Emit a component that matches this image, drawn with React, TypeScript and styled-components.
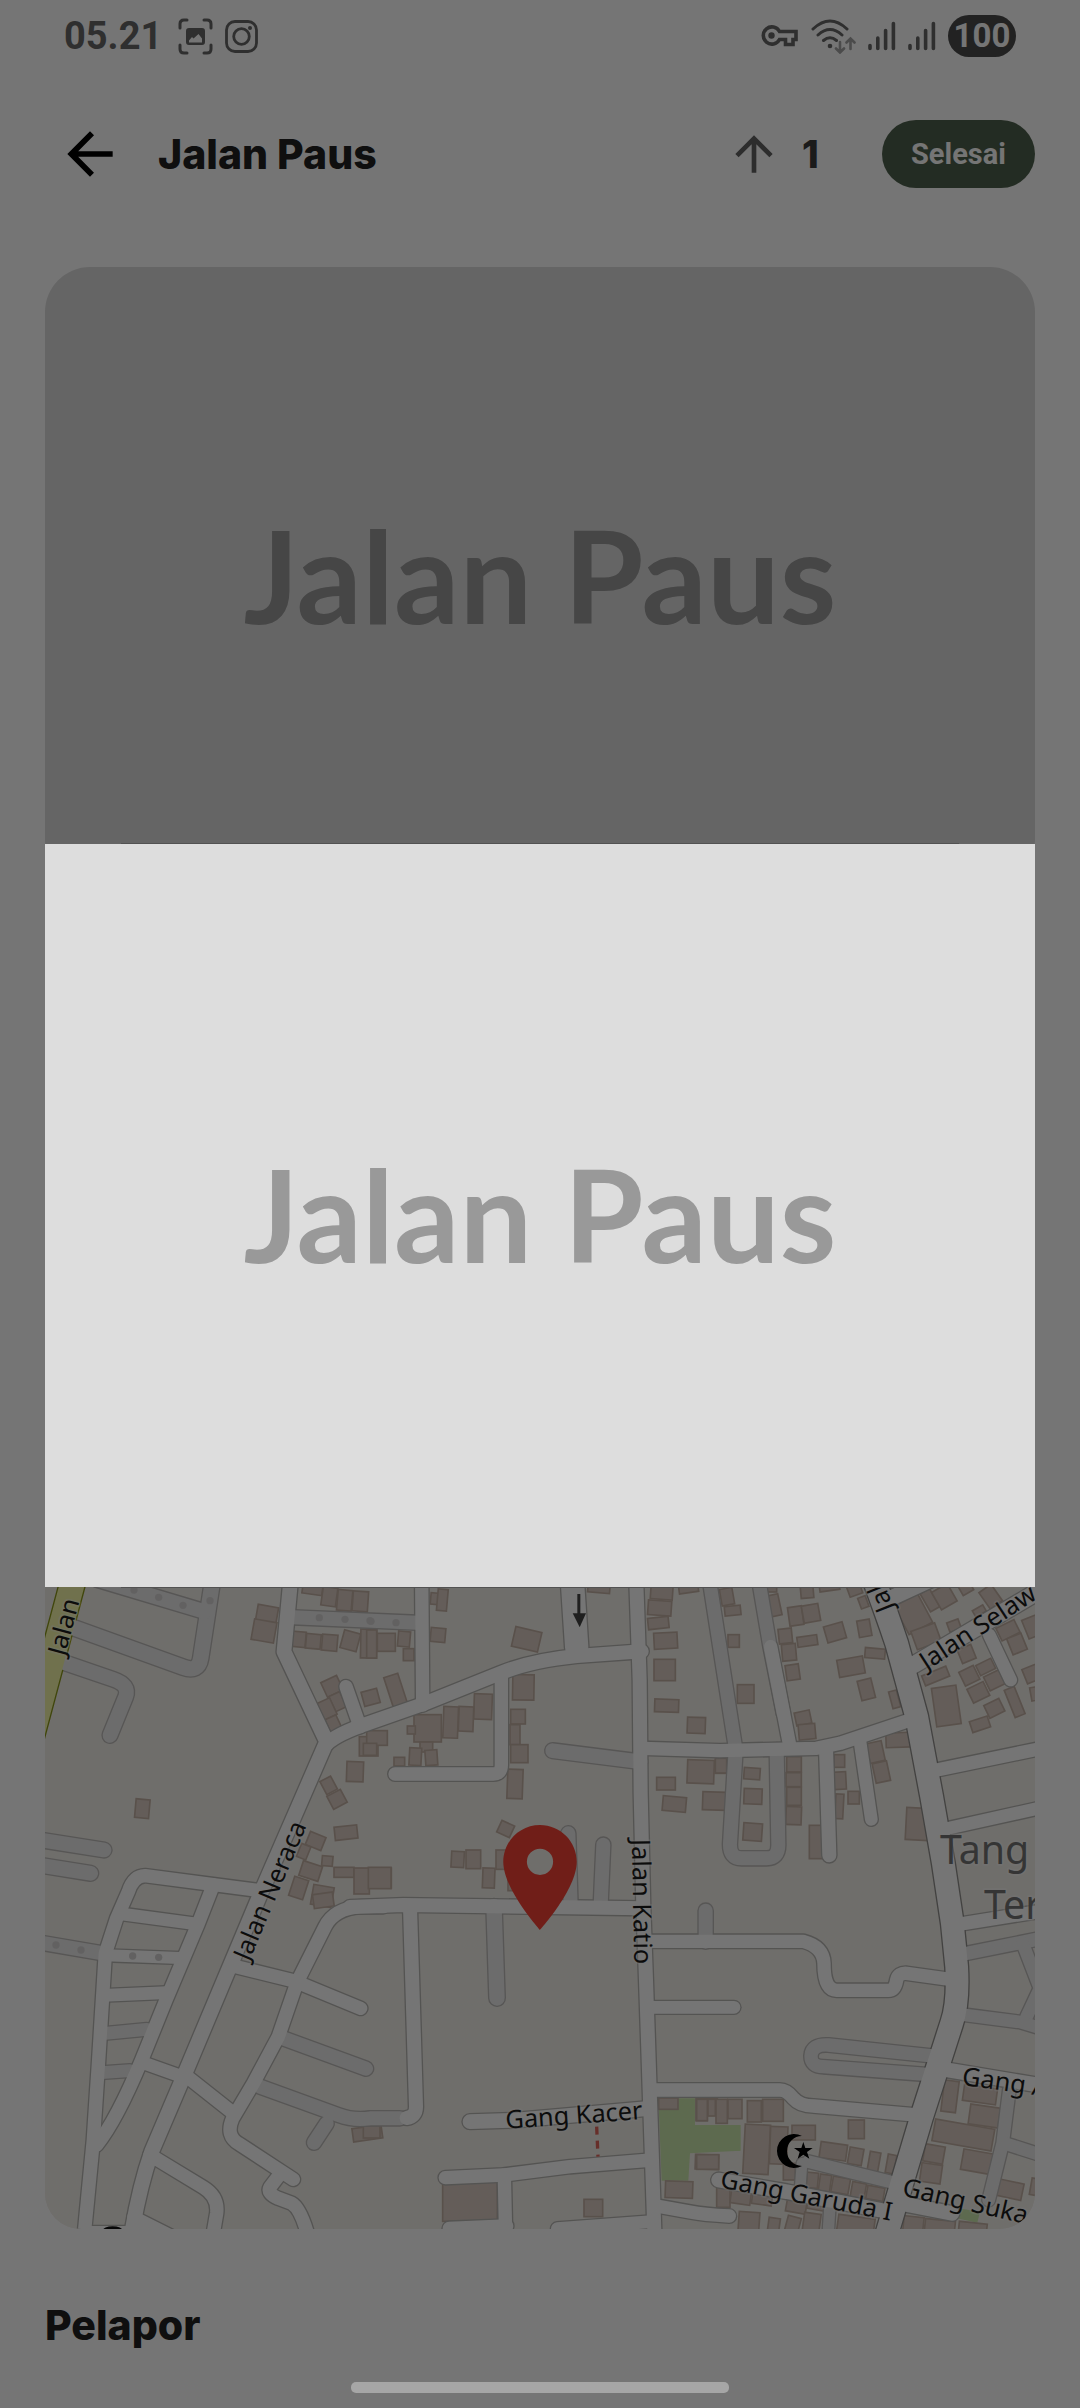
import React from 'react';
import styled, { createGlobalStyle } from 'styled-components';

const GlobalStyle = createGlobalStyle`
  *, *::before, *::after { box-sizing: border-box; }
  html, body { margin: 0; background: #ffffff; }
  body { font-family: Inter, "Open Sans", sans-serif; color: #222222; }
`;

/* ---------- page ---------- */

const Page = styled.div`
  min-height: 100vh;
  display: flex;
  flex-direction: column;
  background: #ffffff;
`;

const StatusBar = styled.div`
  height: 72px;
  padding: 0 64px;
  display: flex;
  align-items: center;
  justify-content: space-between;
  color: #666666;
  font-family: Roboto, sans-serif;
  font-weight: 700;
`;

const StatusGroup = styled.div<{ $gap: number }>`
  display: flex;
  align-items: center;
  gap: ${(p) => p.$gap}px;
`;

const Clock = styled.span`
  font-size: 38px;
  line-height: 48px;
  margin-right: 4px;
`;

const Battery = styled.span`
  width: 68px;
  height: 42px;
  border-radius: 21px;
  display: flex;
  align-items: center;
  justify-content: center;
  background: #4a4a4a;
  color: #ffffff;
  font-size: 33px;
  line-height: 42px;
`;

const Header = styled.header`
  height: 164px;
  padding: 0 45px 0 56px;
  display: flex;
  align-items: center;
`;

const IconButton = styled.button`
  border: 0;
  padding: 0;
  background: none;
  display: flex;
  color: inherit;
`;

const BackButton = styled(IconButton)`
  color: #000000;
  margin-right: 34px;
`;

const Title = styled.h1`
  flex: 1;
  margin: 0;
  font-size: 41px;
  line-height: 56px;
  font-weight: 800;
`;

const VoteButton = styled(IconButton)`
  color: #626262;
  margin-right: 20px;
`;

const VoteCount = styled.span`
  width: 80px;
  font-size: 38px;
  line-height: 56px;
  font-weight: 800;
  color: #3c3c3c;
`;

const DoneButton = styled.button`
  border: 0;
  height: 68px;
  width: 153px;
  padding: 0;
  border-radius: 34px;
  background: #4e604c;
  color: #ffffff;
  font-family: Roboto, sans-serif;
  font-size: 29px;
  line-height: 40px;
  font-weight: 700;
`;

const Main = styled.main`
  display: flex;
  flex-direction: column;
  padding: 31px 45px 56px;
`;

const Picture = styled.div<{ $ratio: string }>`
  width: 100%;
  aspect-ratio: ${(p) => p.$ratio};
  padding-bottom: 5px;
  display: flex;
  align-items: center;
  justify-content: center;
  background: #dddddd;
  color: #999999;
  font-family: Lato, sans-serif;
  font-size: 129px;
  line-height: 156px;
  font-weight: 700;
  white-space: nowrap;
`;

const Cover = styled(Picture)`
  border-radius: 45px;
`;

const MapCard = styled.div`
  margin-top: 640px;
  height: 703px;
  border-radius: 36px;
  overflow: hidden;
  background: #f2efe9;
`;

const SectionTitle = styled.h2`
  margin: 68px 0 0;
  font-size: 41px;
  line-height: 56px;
  font-weight: 800;
`;

/* ---------- picture viewer ---------- */

const Overlay = styled.div`
  position: fixed;
  inset: 0;
  padding: 68px 45px 45px;
  display: flex;
  align-items: center;
  justify-content: center;
  background: rgba(0, 0, 0, 0.54);
`;

const Viewer = styled.div`
  position: relative;
  width: 100%;

  &::before {
    content: "";
    position: absolute;
    z-index: -1;
    inset: -1px 76px;
    background: #525252;
  }
`;

const HomeHandle = styled.div`
  position: fixed;
  bottom: 15px;
  left: 50%;
  margin-left: -189px;
  width: 378px;
  height: 11px;
  border-radius: 5px;
  background: #a6a6a6;
`;

/* ---------- map ---------- */

type Tile = 'A' | 'B' | 'C' | 'D' | 'E' | 'F';
type Kind = 'road' | 'service' | 'main' | 'secondary';

const ORIGIN: Record<Tile, [number, number]> = {
  A: [30, 1580], B: [370, 1580], C: [700, 1580],
  D: [30, 1900], E: [370, 1900], F: [700, 1900],
};

const place = (t: Tile) => `translate(${ORIGIN[t][0]} ${ORIGIN[t][1]}) scale(0.33333)`;

const ROAD_STYLE: Record<Kind, { fill: string; edge: string }> = {
  service: { fill: '#ebebeb', edge: '#bdbbb9' },
  road: { fill: '#ffffff', edge: '#b8b7b4' },
  main: { fill: '#ffffff', edge: '#92918e' },
  secondary: { fill: '#f3f6a8', edge: '#8d9a1c' },
};

const ROADS: [Tile, Kind, number, string][] = [
  ['A', 'service', 50, 'M100 132 L460 262 Q505 278 512 235 L548 0'],
  ['A', 'service', 48, 'M200 -2 L525 95'],
  ['A', 'service', 48, 'M80 240 L250 298 Q300 315 287 350 L240 466'],
  ['A', 'service', 46, 'M790 112 L1160 128'],
  ['A', 'service', 48, 'M20 778 L222 810'],
  ['A', 'service', 48, 'M20 854 L182 880'],
  ['D', 'service', 46, 'M20 126 L230 162'],
  ['D', 'service', 42, 'M225 400 L350 388'],
  ['D', 'service', 42, 'M215 518 L300 512'],
  ['D', 'service', 46, 'M760 415 L1008 506'],
  ['D', 'service', 46, 'M890 670 L852 728'],
  ['D', 'service', 46, 'M690 560 L925 645 Q970 662 1020 655 L1110 655'],
  ['B', 'service', 48, 'M548 512 L810 545'],
  ['B', 'service', 46, 'M595 760 L602 975'],
  ['B', 'service', 46, 'M700 794 L692 975'],
  ['C', 'service', 44, 'M28 0 L106 500'],
  ['C', 'service', 44, 'M176 0 L210 200 L250 400'],
  ['C', 'service', 46, 'M107 510 L90 790 Q88 835 125 835 H200 Q235 835 235 795 L230 510'],
  ['E', 'service', 46, 'M1007 32 V125'],
  ['E', 'service', 50, 'M372 20 L381 294'],
  ['F', 'service', 44, 'M780 164 L1020 116'],
  ['F', 'service', 42, 'M968 130 L1020 265 L980 350'],
  ['F', 'service', 42, 'M790 344 L960 366 L1020 384'],
  ['F', 'service', 44, 'M710 469 L385 435 Q335 432 333 468 Q333 500 370 500 L690 524'],
  ['F', 'service', 42, 'M928 570 L908 730 L866 900'],
  ['F', 'service', 42, 'M920 732 L1020 764'],
  ['F', 'service', 42, 'M325 785 L590 850'],
  ['F', 'service', 38, 'M390 915 L384 1010'],
  ['F', 'service', 36, 'M306 790 L300 870'],
  ['A', 'road', 48, 'M783 -10 L762 215 L890 485 L692 940 L465 1480 L365 1715 Q325 1830 300 1990'],
  ['A', 'road', 44, 'M948 320 L990 440'],
  ['A', 'road', 44, 'M690 932 L560 915 L345 887 Q310 888 295 935 L260 1015 L226 1120 L206 1440 L190 1680 L162 1970'],
  ['D', 'road', 44, 'M550 -45 L505 70 L408 300 L335 480 Q260 660 200 735'],
  ['D', 'road', 42, 'M270 41 L500 72'],
  ['D', 'road', 40, 'M228 166 L450 174'],
  ['D', 'road', 42, 'M220 286 L410 278'],
  ['D', 'road', 42, 'M335 487 L470 535'],
  ['D', 'road', 44, 'M465 525 L610 640'],
  ['D', 'road', 44, 'M610 198 L790 242 L992 325'],
  ['D', 'road', 44, 'M1060 20 H990 Q912 26 885 80 L802 245 L745 410 L670 550 L608 655 Q585 708 628 732 L790 838'],
  ['D', 'road', 44, 'M748 825 L720 862 Q710 880 745 895 L785 910 Q812 925 835 1010'],
  ['D', 'road', 44, 'M360 765 L520 862 Q566 890 560 940 L548 1010'],
  ['D', 'road', 40, 'M310 950 L430 1010'],
  ['D', 'road', 44, 'M170 998 H330'],
  ['B', 'road', 46, 'M-130 492 Q-100 462 0 428 L160 372 L390 280 Q480 242 620 228 L815 214'],
  ['B', 'road', 44, 'M155 -10 L158 375'],
  ['B', 'road', 44, 'M394 285 V555 Q394 582 370 582 H75'],
  ['B', 'road', 74, 'M605 -30 L620 200'],
  ['B', 'road', 46, 'M-60 981 L100 975 L820 985'],
  ['E', 'road', 46, 'M120 20 L138 620 Q138 650 110 654'],
  ['B', 'road', 44, 'M815 505 L1050 512 L1340 505 L1410 490 L1615 422'],
  ['C', 'road', 44, 'M212 200 L270 500'],
  ['C', 'road', 46, 'M378 505 L388 826'],
  ['C', 'road', 42, 'M480 485 L514 718'],
  ['C', 'road', 50, 'M550 65 L690 0'],
  ['C', 'road', 54, 'M640 255 L1030 25'],
  ['C', 'road', 42, 'M868 165 L932 300'],
  ['C', 'road', 44, 'M700 572 L1020 506'],
  ['C', 'road', 42, 'M730 748 L1020 684'],
  ['F', 'road', 44, 'M770 74 L1020 34'],
  ['E', 'road', 44, 'M840 124 H1300 Q1360 140 1362 190 Q1362 270 1400 271 H1555 Q1575 271 1580 240 Q1585 218 1610 220 L1740 238'],
  ['E', 'road', 42, 'M845 322 H1092'],
  ['E', 'road', 44, 'M850 570 H1230 Q1250 570 1270 595 Q1290 618 1330 618 L1640 645'],
  ['F', 'road', 48, 'M730 508 L1020 556'],
  ['F', 'road', 48, 'M56 840 L260 875 L590 940'],
  ['F', 'road', 48, 'M590 908 L756 940'],
  ['E', 'road', 44, 'M860 918 L960 936 Q1000 944 1078 948'],
  ['E', 'road', 48, 'M300 665 L430 661 L830 626'],
  ['E', 'road', 44, 'M226 833 L400 825 L600 800 L845 780'],
  ['E', 'road', 44, 'M403 825 L407 1010'],
  ['E', 'road', 44, 'M238 985 L410 978'],
  ['E', 'road', 42, 'M562 986 L845 965'],
  ['B', 'road', 46, 'M798 -20 L809 300 L812 640 L820 980 L828 1200 L840 1560 L854 1980'],
  ['C', 'main', 72, 'M515 -20 Q560 100 590 190 L650 410 L695 650 L730 850 L757 1030 L770 1160 Q776 1270 755 1330 L665 1610 L555 1980'],
  ['A', 'secondary', 78, 'M152 -82 L-20 562'],
];

// x, y, width, height and turn of each footprint
const BUILDINGS: [Tile, number, number, number, number, number][] = [
  ['A', 680, 78, 62, 50, 10], ['A', 668, 122, 68, 62, 10], ['A', 818, 5, 60, 38, 8], ['A', 876, 22, 44, 56, 8],
  ['A', 922, 30, 44, 62, 5], ['A', 968, 34, 46, 60, 4], ['A', 785, 155, 42, 46, 5], ['A', 828, 162, 44, 44, 5],
  ['A', 876, 164, 46, 48, 5], ['A', 936, 155, 50, 55, 15], ['A', 992, 148, 48, 86, 1],
  ['A', 880, 295, 52, 48, -25], ['A', 905, 340, 36, 50, -25], ['A', 868, 360, 44, 54, -25], ['A', 892, 410, 36, 42, -25],
  ['A', 998, 330, 48, 44, -15], ['A', 950, 545, 50, 60, 2], ['A', 988, 470, 56, 58, 0],
  ['A', 878, 594, 36, 44, -28], ['A', 898, 636, 46, 44, -28], ['A', 316, 658, 42, 56, 5],
  ['A', 914, 738, 68, 40, -6], ['A', 832, 762, 50, 42, 22], ['A', 806, 794, 30, 42, 22], ['A', 876, 828, 32, 30, 5],
  ['A', 812, 850, 60, 46, 18], ['A', 784, 894, 44, 60, 18], ['A', 846, 918, 62, 60, 10], ['A', 912, 862, 60, 30, 0],
  ['A', 972, 864, 46, 78, 0], ['A', 1020, 864, 64, 60, 0],
  ['D', 850, -20, 60, 42, -8], ['D', 968, 680, 88, 40, -8],
  ['B', 182, 40, 44, 34, 5], ['B', 202, 28, 30, 64, 5], ['B', 182, 144, 44, 42, 5], ['B', -10, 150, 30, 84, 0],
  ['B', 22, 160, 54, 54, 0], ['B', 84, 154, 36, 46, 5], ['B', 100, 206, 32, 36, 0], ['B', 55, 284, 44, 96, -18],
  ['B', 430, 148, 80, 60, 13], ['B', 654, 4, 66, 34, 5], ['B', 428, 284, 64, 76, 1], ['B', 312, 342, 54, 76, 2],
  ['B', 266, 380, 44, 74, 2], ['B', 220, 380, 44, 94, 2], ['B', 132, 404, 82, 82, 0], ['B', 112, 438, 24, 24, 0],
  ['B', 150, 486, 38, 30, 0], ['B', 118, 504, 36, 52, 3], ['B', 166, 510, 36, 46, -4], ['B', 72, 532, 32, 26, 0],
  ['B', 422, 388, 44, 44, 0], ['B', 420, 434, 30, 60, 0], ['B', 422, 494, 52, 54, 0], ['B', 412, 568, 46, 88, 2],
  ['B', -10, 452, 62, 44, 0], ['B', -20, 490, 40, 36, 0], ['B', 386, 728, 42, 38, 25],
  ['B', 244, 814, 38, 48, 3], ['B', 288, 810, 44, 56, 0], ['B', 338, 864, 36, 60, 2], ['B', 378, 810, 44, 58, 0],
  ['B', 414, 880, 60, 52, 0], ['B', -5, 862, 68, 64, 0],
  ['B', 842, 18, 66, 40, 4], ['B', 834, 62, 70, 44, 4], ['B', 834, 112, 62, 34, -6], ['B', 926, 4, 58, 34, -8],
  ['B', 852, 158, 70, 48, -3], ['B', 852, 238, 64, 64, 0], ['B', 854, 358, 72, 38, 2], ['B', 952, 412, 54, 48, 2],
  ['B', 952, 540, 80, 70, 2], ['B', 1036, 540, 34, 40, 0], ['B', 860, 592, 56, 38, 0], ['B', 878, 650, 70, 44, 5],
  ['B', 998, 636, 70, 54, 2],
  ['C', 62, 25, 38, 50, -10], ['C', 74, 78, 48, 28, -6], ['C', 84, 164, 34, 38, 0], ['C', 112, 314, 50, 56, 0],
  ['C', 206, 44, 34, 64, -12], ['C', 200, 16, 30, 20, 0], ['C', 302, 14, 38, 40, -5], ['C', 266, 80, 42, 56, -8],
  ['C', 308, 74, 50, 52, -10], ['C', 236, 146, 40, 44, -6], ['C', 246, 192, 42, 50, -5], ['C', 258, 254, 40, 46, -8],
  ['C', 292, 168, 60, 30, -8], ['C', 376, 132, 58, 50, -16], ['C', 474, 120, 38, 50, -10], ['C', 495, 205, 60, 30, 5],
  ['C', 414, 234, 78, 52, -10], ['C', 478, 298, 42, 60, -14], ['C', 572, 332, 24, 52, -15], ['C', 286, 394, 46, 40, -12],
  ['C', 296, 432, 50, 46, -5], ['C', 444, 14, 40, 32, -20], ['C', 478, 50, 24, 34, -20], ['C', 358, 4, 60, 28, -8],
  ['C', 600, 55, 80, 96, -28], ['C', 640, 140, 76, 58, -20], ['C', 674, 30, 32, 62, -30], ['C', 706, 20, 54, 60, -30],
  ['C', 780, 10, 36, 30, -30], ['C', 850, 20, 44, 60, -35], ['C', 820, 82, 36, 22, -30], ['C', 744, 122, 36, 30, -20],
  ['C', 778, 200, 44, 44, -22], ['C', 668, 272, 78, 32, -22], ['C', 702, 320, 74, 116, -8], ['C', 784, 264, 48, 46, -26],
  ['C', 832, 244, 50, 34, -26], ['C', 808, 314, 54, 46, -26], ['C', 858, 278, 50, 46, -26], ['C', 858, 364, 50, 42, -26],
  ['C', 812, 416, 56, 34, -18], ['C', 928, 322, 32, 88, -22], ['C', 894, 130, 60, 42, -26], ['C', 928, 166, 46, 52, -22],
  ['C', 974, 108, 60, 60, -22], ['C', 972, 256, 60, 46, -22], ['C', 992, 320, 40, 40, -10],
  ['C', 46, 535, 34, 44, 0], ['C', 132, 564, 48, 34, 4], ['C', 132, 626, 54, 46, 2], ['C', 130, 730, 56, 52, 4],
  ['C', 260, 530, 44, 46, 0], ['C', 258, 578, 46, 42, 0], ['C', 260, 622, 44, 54, 0], ['C', 258, 680, 46, 54, 2],
  ['C', 328, 736, 42, 100, 0], ['C', 402, 524, 32, 38, 0], ['C', 402, 576, 36, 52, -3], ['C', 406, 642, 24, 74, 3],
  ['C', 444, 634, 34, 38, 0], ['C', 504, 486, 46, 60, -12], ['C', 522, 546, 44, 60, -12], ['C', 558, 458, 72, 44, -2],
  ['C', 618, 684, 68, 96, 3],
  ['E', 218, 846, 164, 118, 0], ['E', -20, 678, 50, 36, 0], ['E', 642, 898, 56, 52, 0],
  ['E', 866, 594, 58, 34, 0], ['E', 886, 844, 82, 50, 2], ['E', 976, 764, 70, 44, 2], ['E', 978, 596, 34, 66, 0],
  ['E', 1016, 596, 26, 50, 0],
  ['F', -10, 598, 32, 64, 0], ['F', 24, 598, 22, 50, 0], ['F', 48, 598, 34, 72, 0], ['F', 84, 598, 42, 58, 0],
  ['F', 142, 602, 42, 64, 0], ['F', 188, 598, 62, 66, 0], ['F', 132, 674, 76, 148, 3], ['F', 210, 680, 52, 112, 2],
  ['F', 276, 676, 70, 44, 0], ['F', 445, 660, 48, 56, 0], ['F', 360, 730, 80, 48, 8], ['F', 446, 744, 42, 50, 10],
  ['F', 506, 756, 32, 58, 10], ['F', 560, 764, 26, 56, 10], ['F', -10, 764, 66, 44, 0], ['F', 250, 790, 36, 50, 0],
  ['F', 320, 818, 34, 46, 5], ['F', 358, 824, 34, 50, 8], ['F', 396, 832, 52, 48, 10], ['F', 454, 848, 42, 46, 10],
  ['F', 500, 860, 52, 40, 10], ['F', 50, 862, 40, 60, 0], ['F', 92, 874, 60, 38, 8], ['F', 156, 882, 60, 32, 8],
  ['F', 260, 888, 60, 50, 10], ['F', 322, 900, 60, 30, 10], ['F', 116, 936, 62, 56, 4], ['F', 204, 954, 34, 50, 8],
  ['F', 258, 950, 40, 52, 15], ['F', 310, 940, 50, 56, 8], ['F', 412, 950, 110, 60, 8],
  ['F', 728, 542, 44, 94, 7], ['F', 790, 560, 100, 48, 8], ['F', 808, 618, 90, 60, 8], ['F', 700, 672, 180, 66, 10],
  ['F', 672, 736, 60, 52, 10], ['F', 662, 792, 62, 56, 8], ['F', 786, 754, 90, 62, 10], ['F', 892, 844, 76, 50, 12],
  ['F', 610, 950, 60, 50, 6], ['F', 674, 960, 90, 50, 6], ['F', 776, 968, 84, 40, 6], ['F', 992, 836, 30, 50, 10],
];

const TREES: [Tile, number, number][] = [
  ['A', 312, 30], ['A', 386, 52], ['A', 459, 76], ['A', 540, 62], ['A', 868, 113], ['A', 945, 118], ['A', 1020, 122],
  ['B', 3, 124], ['B', 78, 128], ['D', 78, 135], ['D', 153, 150], ['D', 308, 168], ['D', 386, 172],
];

const LABELS: [Tile, number, number, number, string][] = [
  ['A', 104, 230, -75, 'Jalan'],
  ['D', 657, 186, -67, 'Jalan Neraca'],
  ['B', 786, 778, 89, 'Jalan Katio'],
  ['C', 582, 84, -112, 'Jal'],
  ['C', 680, 272, -33, 'Jalan Selaw'],
  ['E', 408, 686, -4, 'Gang Kacer'],
  ['F', 784, 554, 8, 'Gang A'],
  ['F', 58, 862, 11, 'Gang Garuda I'],
  ['F', 604, 886, 13, 'Gang Suka'],
];

const MapSvg = styled.svg`
  display: block;
  width: 100%;
  height: 100%;
`;

const StreetLabel = styled.text`
  font-family: "Noto Sans", sans-serif;
  font-size: 76px;
  fill: #1c1c1c;
  stroke: rgba(255, 255, 255, 0.4);
  stroke-width: 10px;
  stroke-linejoin: round;
  paint-order: stroke;
`;

const PlaceLabel = styled(StreetLabel)`
  font-size: 118px;
  fill: #757575;
`;

const KINDS: Kind[] = ['service', 'road', 'main', 'secondary'];

function StreetMap() {
  return (
    <MapSvg viewBox="45 1526 990 703" preserveAspectRatio="xMidYMid slice" role="img" aria-label="Jalan Paus">
      <rect x="45" y="1526" width="990" height="703" fill="#f2efe9" />
      <g fill="#cbe8ac">
        <path transform={place('E')} d="M865 595H975V675H1112V752L960 760 955 842H875Z" />
        <path transform={place('F')} d="M0 675H120V752H0ZM775 925 840 935 832 968 770 955Z" />
      </g>
      <g fill="#d9cbc3" stroke="#c3b0a4" strokeWidth="5">
        {BUILDINGS.map(([t, x, y, w, h, r], i) => (
          <g key={i} transform={place(t)}>
            <rect x={x} y={y} width={w} height={h} transform={`rotate(${r} ${x + w / 2} ${y + h / 2})`} />
          </g>
        ))}
      </g>
      <g fill="none" strokeLinecap="round" strokeLinejoin="round">
        {ROADS.map(([t, k, w, d], i) => (
          <path key={i} transform={place(t)} d={d} stroke={ROAD_STYLE[k].edge} strokeWidth={w + 4} />
        ))}
        {KINDS.map((kind) =>
          ROADS.filter((r) => r[1] === kind).map(([t, k, w, d], i) => (
            <path key={kind + i} transform={place(t)} d={d} stroke={ROAD_STYLE[k].fill} strokeWidth={w - 4} />
          )),
        )}
      </g>
      <g fill="#d6d4d4">
        {TREES.map(([t, x, y], i) => (
          <circle key={i} transform={place(t)} cx={x} cy={y} r="11" />
        ))}
      </g>
      <g transform={place('B')} fill="#444444">
        <path d="M622 42h9v60h-9z" />
        <path d="M608 100h40l-19 42z" />
      </g>
      <path transform={place('E')} d="M680 680 684 770" stroke="#e0685c" strokeWidth="10" strokeDasharray="24 18" />
      <g transform={place('F')} fill="#000000">
        <path d="M306 708A51 51 0 1 0 306 798A45 45 0 1 1 306 708Z" />
        <path d="M310 726 316 744 338 744 321 756 328 776 310 764 293 776 299 756 282 744 304 744Z" />
      </g>
      <ellipse transform={place('D')} cx="248" cy="992" rx="30" ry="13" fill="#111111" />
      {LABELS.map(([t, x, y, r, name], i) => (
        <g key={i} transform={place(t)}>
          <StreetLabel transform={`translate(${x} ${y}) rotate(${r})`}>{name}</StreetLabel>
        </g>
      ))}
      <g transform={place('C')}>
        <PlaceLabel x="720" y="852">Tang</PlaceLabel>
        <PlaceLabel x="852" y="1016">Ter</PlaceLabel>
      </g>
      <path
        transform="translate(477 1814.5) scale(5.25)"
        fill="#f44336"
        d="M12 2C8.13 2 5 5.13 5 9c0 5.25 7 13 7 13s7-7.75 7-13c0-3.87-3.13-7-7-7zm0 9.500a2.500 2.500 0 0 1 0-5 2.500 2.500 0 0 1 0 5z"
      />
    </MapSvg>
  );
}

/* ---------- icons ---------- */

const CaptureIcon = () => (
  <svg width="35" height="37" viewBox="0 0 35 37" fill="none" stroke="currentColor" strokeWidth="3" strokeLinecap="round">
    <path d="M2 10V6Q2 2 6 2H9M26 2H29Q33 2 33 6V10M33 27V31Q33 35 29 35H26M9 35H6Q2 35 2 31V27" />
    <path d="M11 10H24Q27 10 27 13V24Q27 27 24 27H11Q8 27 8 24V13Q8 10 11 10ZM11 24.500H24V20.500L20.500 16 15.500 20.500 14 19 11 22.500Z" fill="currentColor" fillRule="evenodd" stroke="none" />
  </svg>
);

const InstagramIcon = () => (
  <svg width="33" height="33" viewBox="0 0 33 33" fill="none" stroke="currentColor" strokeWidth="2.800">
    <rect x="1.500" y="1.500" width="30" height="30" rx="8.500" />
    <circle cx="16.500" cy="16.500" r="7.800" />
    <circle cx="25" cy="8" r="2" fill="currentColor" stroke="none" />
  </svg>
);

const KeyIcon = () => (
  <svg width="38" height="22" viewBox="0 0 38 22" fill="none" stroke="currentColor" strokeWidth="3.600">
    <path d="M18.500 6.500A8.600 8.600 0 1 0 18.500 14.500H24.500V19.500H32V14.500H35V6.500Z" />
    <circle cx="10.500" cy="10.500" r="3.200" fill="currentColor" stroke="none" />
  </svg>
);

const WifiIcon = () => (
  <svg width="45" height="35" viewBox="0 0 45 35" fill="none" stroke="currentColor" strokeWidth="3" strokeLinecap="round">
    <path d="M2 10Q19 -6 36 10M7 16Q19 5 31 16M12.500 21.500Q19 16 25.500 21.500" />
    <circle cx="19" cy="27" r="2.300" fill="currentColor" stroke="none" />
    <path d="M29 23V33M25 29.500L29 33.500 33 29.500M39.500 30V20M35.500 23.500L39.500 19.500 43.500 23.500" stroke="#a3a3a3" strokeWidth="2.600" />
  </svg>
);

const SignalIcon = () => (
  <svg width="28" height="30" viewBox="0 0 28 30" fill="none" stroke="currentColor" strokeWidth="3.600" strokeLinecap="round">
    <path d="M2 24.500V27.500M9.800 17V27.500M17.600 9.500V27.500M25.400 2.500V27.500" />
  </svg>
);

const BackIcon = () => (
  <svg width="68" height="68" viewBox="0 0 24 24" fill="currentColor">
    <path d="M20 11H7.830l5.590-5.590L12 4l-8 8 8 8 1.410-1.410L7.830 13H20v-2z" />
  </svg>
);

const UpIcon = () => (
  <svg width="56" height="56" viewBox="0 0 24 24" fill="currentColor">
    <path d="M4 12l1.410 1.410L11 7.830V20h2V7.830l5.580 5.590L20 12l-8-8-8 8z" />
  </svg>
);

export default function App() {
  return (
    <>
      <GlobalStyle />
      <Page>
        <StatusBar>
          <StatusGroup $gap={12}>
            <Clock>05.21</Clock>
            <CaptureIcon />
            <InstagramIcon />
          </StatusGroup>
          <StatusGroup $gap={12}>
            <KeyIcon />
            <WifiIcon />
            <SignalIcon />
            <SignalIcon />
            <Battery>100</Battery>
          </StatusGroup>
        </StatusBar>
        <Header>
          <BackButton aria-label="Kembali"><BackIcon /></BackButton>
          <Title>Jalan Paus</Title>
          <VoteButton aria-label="Dukung"><UpIcon /></VoteButton>
          <VoteCount>1</VoteCount>
          <DoneButton>Selesai</DoneButton>
        </Header>
        <Main>
          <Cover $ratio="8 / 5">Jalan Paus</Cover>
          <MapCard><StreetMap /></MapCard>
          <SectionTitle>Pelapor</SectionTitle>
        </Main>
      </Page>
      <Overlay>
        <Viewer role="dialog" aria-label="Jalan Paus">
          <Picture $ratio="4 / 3">Jalan Paus</Picture>
        </Viewer>
      </Overlay>
      <HomeHandle />
    </>
  );
}
